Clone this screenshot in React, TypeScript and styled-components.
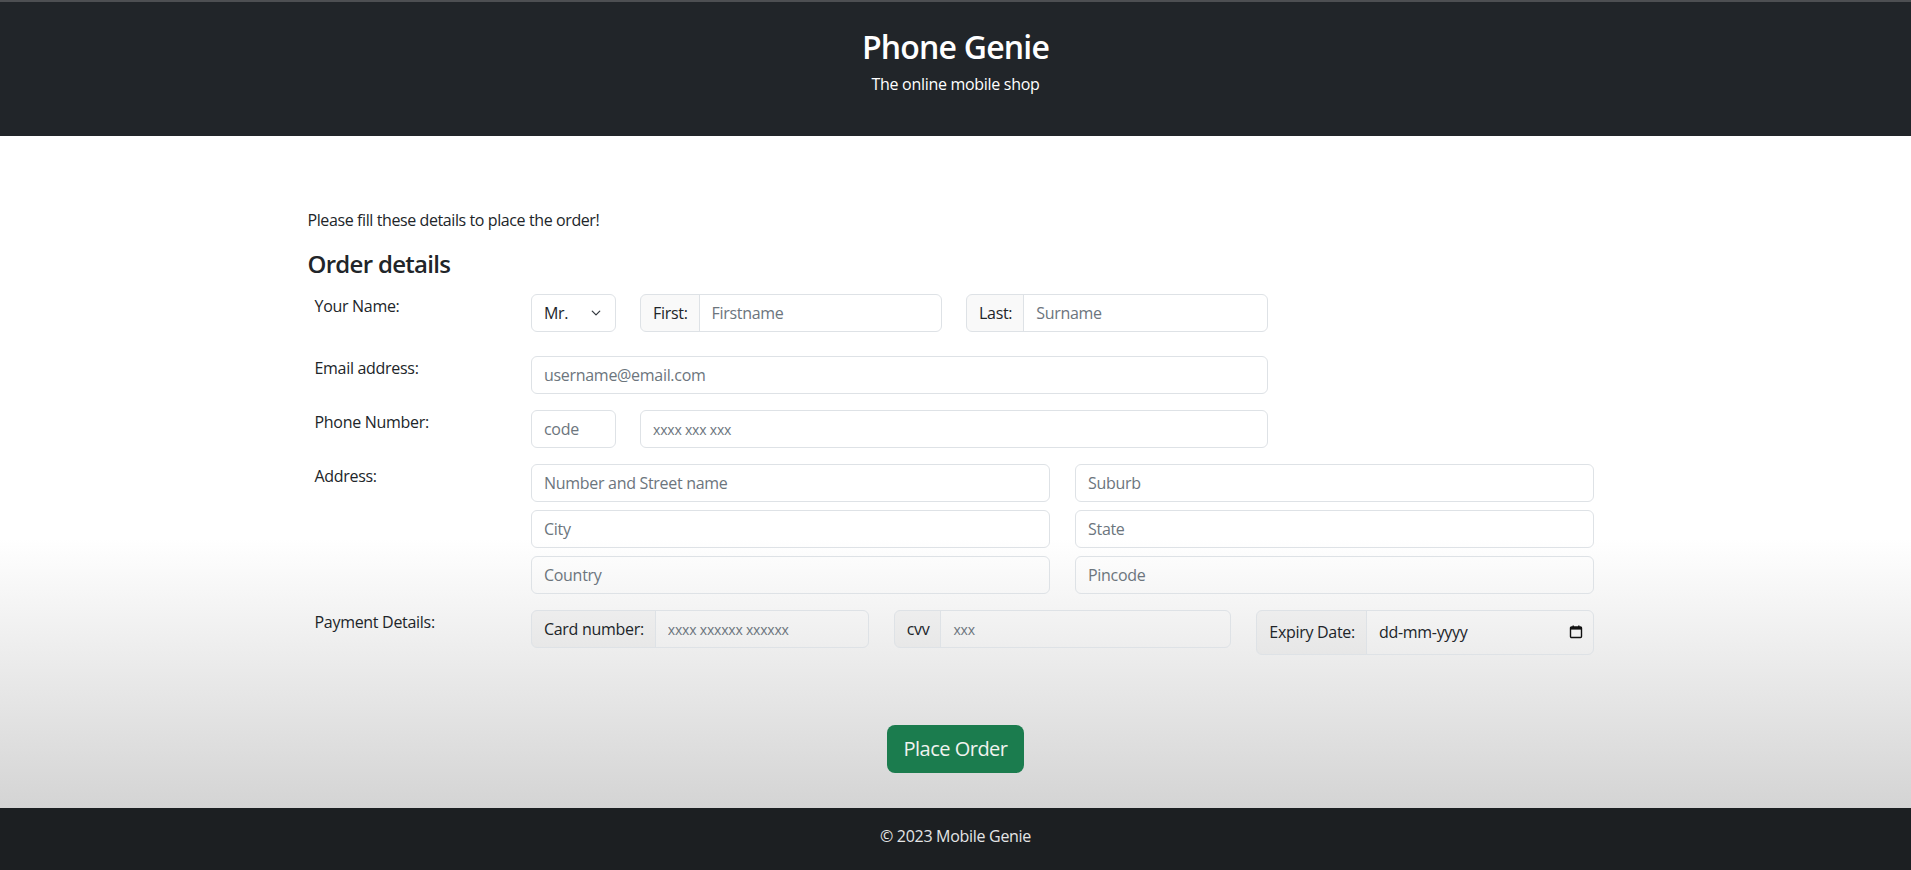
import React from "react";
import styled, { createGlobalStyle } from "styled-components";

const FONT = `"Open Sans", "Noto Sans", Arial, sans-serif`;

const GlobalStyle = createGlobalStyle`
  html, body { margin: 0; padding: 0; }
  body {
    font-family: ${FONT};
    color: #212529;
    background: #fff;
    -webkit-font-smoothing: antialiased;
  }
  * { box-sizing: border-box; }
`;

const Page = styled.div`
  min-height: 870px;
  display: flex;
  flex-direction: column;
`;

const Header = styled.header`
  height: 136px;
  background: #212529;
  border-top: 2px solid #4d4f52;
  color: #fff;
  text-align: center;
  padding-top: 26px;
`;

const Title = styled.h1`
  margin: 0;
  font-size: 32px;
  font-weight: 600;
  line-height: 1.2;
  letter-spacing: -0.8px;
`;

const Tagline = styled.p`
  margin: 6px 0 0;
  font-size: 16px;
  line-height: 24px;
  letter-spacing: -0.3px;
`;

const Main = styled.main`
  flex: 1;
  background: linear-gradient(to bottom, #ffffff 60%, #d4d4d4 100%);
  padding: 72px 0 35px;
`;

const Container = styled.div`
  width: 1296px;
  margin: 0 auto;
`;

const Intro = styled.p`
  margin: 0;
  font-size: 16px;
  line-height: 24px;
  letter-spacing: -0.4px;
`;

const Heading = styled.h4`
  margin: 18px 0 15px;
  font-size: 24px;
  font-weight: 600;
  line-height: 1.2;
  letter-spacing: -0.7px;
`;

const FormRow = styled.div<{ $mt?: number }>`
  display: grid;
  grid-template-columns: 223.5px 1063px;
  align-items: start;
  margin-top: ${(p) => p.$mt ?? 16}px;
`;

const Label = styled.label`
  padding-left: 7px;
  font-size: 16px;
  line-height: 24px;
  letter-spacing: -0.3px;
`;

const FieldLine = styled.div<{ $width?: number }>`
  display: flex;
  gap: 24px;
  width: ${(p) => (p.$width ? `${p.$width}px` : "100%")};
`;

const FieldGrid = styled.div<{ $cols: number }>`
  display: grid;
  grid-template-columns: repeat(${(p) => p.$cols}, 1fr);
  column-gap: 25px;
  row-gap: 8px;
  align-items: start;
`;

const Input = styled.input<{ $w?: number }>`
  display: block;
  height: 38px;
  width: ${(p) => (p.$w ? `${p.$w}px` : "100%")};
  flex: ${(p) => (p.$w ? "none" : "1")};
  padding: 6px 12px;
  border: 1px solid #dee2e6;
  border-radius: 6px;
  background: transparent;
  font-family: ${FONT};
  font-size: 16px;
  letter-spacing: -0.3px;
  color: #212529;
  outline: none;
  &::placeholder { color: #6c757d; opacity: 1; }
`;

const Group = styled.div<{ $w?: number; $h?: number }>`
  display: flex;
  align-items: stretch;
  height: ${(p) => p.$h ?? 38}px;
  width: ${(p) => (p.$w ? `${p.$w}px` : "100%")};
  border: 1px solid #dee2e6;
  border-radius: 6px;
  overflow: hidden;
`;

const Addon = styled.span`
  display: flex;
  align-items: center;
  padding: 0 11px 0 12px;
  background: rgba(33, 37, 41, 0.028);
  border-right: 1px solid #dee2e6;
  font-size: 16px;
  letter-spacing: -0.3px;
  white-space: nowrap;
`;

const GroupInput = styled.input`
  flex: 1;
  min-width: 0;
  border: none;
  background: transparent;
  padding: 0 12px;
  font-family: ${FONT};
  font-size: 16px;
  letter-spacing: -0.3px;
  color: #212529;
  outline: none;
  &::placeholder { color: #6c757d; opacity: 1; }
`;

const SmallPlaceholderInput = styled(GroupInput)`
  &::placeholder { font-size: 14px; letter-spacing: -0.2px; }
`;

const SelectBox = styled.div`
  display: flex;
  align-items: center;
  justify-content: space-between;
  width: 85px;
  height: 38px;
  flex: none;
  padding: 0 12px;
  border: 1px solid #dee2e6;
  border-radius: 6px;
  font-size: 16px;
  letter-spacing: -0.3px;
  color: #212529;
`;

const DateBox = styled.div`
  flex: 1;
  display: flex;
  align-items: center;
  justify-content: space-between;
  padding: 0 10px 0 12px;
  font-size: 16px;
  letter-spacing: -0.3px;
`;

const PhoneInput = styled(Input)`
  &::placeholder { font-size: 14px; letter-spacing: -0.2px; }
`;

const Actions = styled.div`
  display: flex;
  justify-content: center;
  margin-top: 70px;
`;

const Button = styled.button`
  height: 48px;
  padding: 0 16px;
  border: none;
  border-radius: 8px;
  background: #1b7c4e;
  color: #f1f3ef;
  font-family: ${FONT};
  font-size: 20px;
  letter-spacing: -0.5px;
  cursor: pointer;
`;

const Footer = styled.footer`
  height: 63px;
  background: #1c1f22;
  color: #e4e5e6;
  display: flex;
  align-items: center;
  justify-content: center;
  padding-bottom: 6px;
  font-size: 16px;
  letter-spacing: -0.3px;
`;

const Chevron = () => (
  <svg width="14" height="10" viewBox="0 0 16 16" fill="none">
    <path d="M2 5l6 6 6-6" stroke="#343a40" strokeWidth="2" strokeLinecap="round" strokeLinejoin="round" />
  </svg>
);

const CalendarIcon = () => (
  <svg width="14" height="14" viewBox="0 0 14 14" fill="none">
    <rect x="1.5" y="2" width="11" height="10.5" rx="1" stroke="#111" strokeWidth="1.4" />
    <rect x="1.5" y="2" width="11" height="2.6" fill="#111" />
    <rect x="3.5" y="0.5" width="1.4" height="2" fill="#111" />
    <rect x="9.1" y="0.5" width="1.4" height="2" fill="#111" />
  </svg>
);

export default function App() {
  return (
    <Page>
      <GlobalStyle />
      <Header>
        <Title>Phone Genie</Title>
        <Tagline>The online mobile shop</Tagline>
      </Header>
      <Main>
        <Container>
          <Intro>Please fill these details to place the order!</Intro>
          <Heading>Order details</Heading>

          <FormRow $mt={0}>
            <Label>Your Name:</Label>
            <FieldLine $width={737}>
              <SelectBox>
                <span>Mr.</span>
                <Chevron />
              </SelectBox>
              <Group $w={302}>
                <Addon>First:</Addon>
                <GroupInput placeholder="Firstname" />
              </Group>
              <Group $w={302}>
                <Addon>Last:</Addon>
                <GroupInput placeholder="Surname" />
              </Group>
            </FieldLine>
          </FormRow>

          <FormRow $mt={24}>
            <Label>Email address:</Label>
            <FieldLine $width={737}>
              <Input placeholder="username@email.com" />
            </FieldLine>
          </FormRow>

          <FormRow>
            <Label>Phone Number:</Label>
            <FieldLine $width={737}>
              <Input $w={85} placeholder="code" />
              <PhoneInput placeholder="xxxx xxx xxx" />
            </FieldLine>
          </FormRow>

          <FormRow>
            <Label>Address:</Label>
            <FieldGrid $cols={2}>
              <Input placeholder="Number and Street name" />
              <Input placeholder="Suburb" />
              <Input placeholder="City" />
              <Input placeholder="State" />
              <Input placeholder="Country" />
              <Input placeholder="Pincode" />
            </FieldGrid>
          </FormRow>

          <FormRow>
            <Label>Payment Details:</Label>
            <FieldGrid $cols={3}>
              <Group>
                <Addon>Card number:</Addon>
                <SmallPlaceholderInput placeholder="xxxx xxxxxx xxxxxx" />
              </Group>
              <Group>
                <Addon>cvv</Addon>
                <SmallPlaceholderInput placeholder="xxx" />
              </Group>
              <Group $h={45}>
                <Addon>Expiry Date:</Addon>
                <DateBox>
                  <span>dd-mm-yyyy</span>
                  <CalendarIcon />
                </DateBox>
              </Group>
            </FieldGrid>
          </FormRow>

          <Actions>
            <Button>Place Order</Button>
          </Actions>
        </Container>
      </Main>
      <Footer>© 2023 Mobile Genie</Footer>
    </Page>
  );
}
